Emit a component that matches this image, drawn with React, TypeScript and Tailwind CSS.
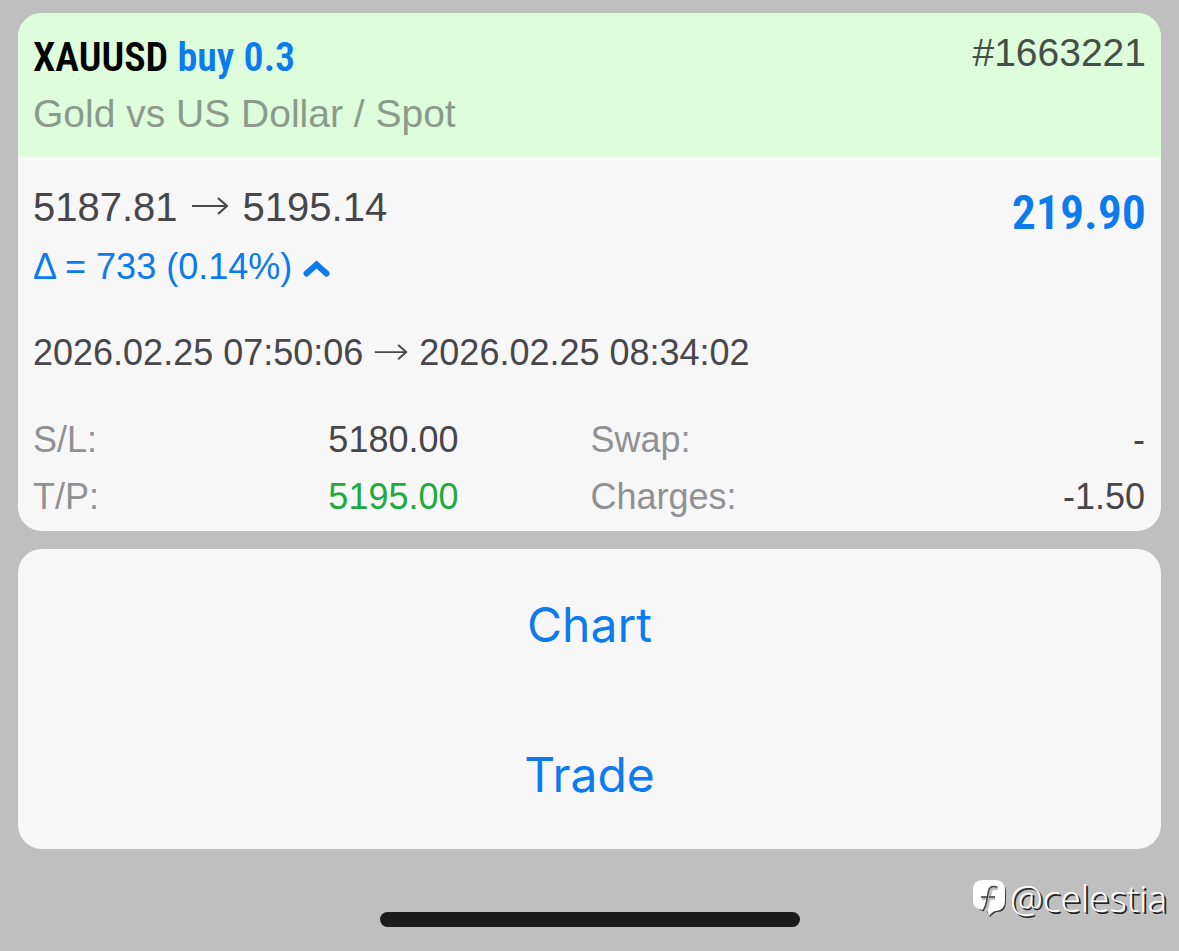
import type { ReactNode } from "react";
import { clsx } from "clsx";

interface Deal {
  symbol: string;
  side: string;
  volume: string;
  description: string;
  ticket: string;
  openPrice: string;
  closePrice: string;
  openTime: string;
  closeTime: string;
  delta: string;
  profit: string;
}

const DEAL: Deal = {
  symbol: "XAUUSD",
  side: "buy",
  volume: "0.3",
  description: "Gold vs US Dollar / Spot",
  ticket: "#1663221",
  openPrice: "5187.81",
  closePrice: "5195.14",
  openTime: "2026.02.25 07:50:06",
  closeTime: "2026.02.25 08:34:02",
  delta: "Δ = 733 (0.14%)",
  profit: "219.90",
};

const ACTIONS = ["Chart", "Trade"];

function Arrow({ className }: { className?: string }) {
  return (
    <svg
      viewBox="0 0 38 20"
      fill="none"
      stroke="currentColor"
      strokeWidth="1.8"
      className={clsx("shrink-0", className)}
      aria-hidden="true"
    >
      <path d="M1 9H36" />
      <path d="M27 1L36 9L27 17" strokeWidth="2.2" strokeLinejoin="round" />
    </svg>
  );
}

function Detail({ label, value, className }: { label: string; value: string; className?: string }) {
  return (
    <div className="flex justify-between">
      <dt className="text-[#919193]">{label}</dt>
      <dd className={className}>{value}</dd>
    </div>
  );
}

function Card({ children }: { children: ReactNode }) {
  return <section className="overflow-hidden rounded-3xl bg-[#f7f7f7]">{children}</section>;
}

function DealCard({ deal }: { deal: Deal }) {
  return (
    <Card>
      <header className="flex justify-between bg-[#ddfddb] px-[15px] pt-[14px] pb-[18px]">
        <div>
          <h1 className="font-['Roboto_Condensed',Roboto,sans-serif] text-[40px] leading-[62px] font-semibold text-black">
            {deal.symbol}{" "}
            <span className="text-[#0b7bee]">
              {deal.side} {deal.volume}
            </span>
          </h1>
          <p className="text-[39px] leading-[50px] text-[#8b9b8a]">{deal.description}</p>
        </div>
        <p className="text-[39px] leading-[52px] text-[#435046]">{deal.ticket}</p>
      </header>

      <div className="px-[15px] pt-5 pb-[6px] text-[36px] leading-[60px] text-[#47474a]">
        <div className="flex justify-between">
          <div>
            <p className="flex items-center text-[40px]">
              {deal.openPrice}
              <Arrow className="mr-[14px] ml-[13px] h-5 w-[38px]" />
              {deal.closePrice}
            </p>
            <button type="button" className="flex items-center gap-[11px] text-[#0b7bee]">
              {deal.delta}
              <svg viewBox="0 0 27 20" fill="none" stroke="currentColor" strokeWidth="6" className="mt-1 h-5 w-[27px]" aria-hidden="true">
                <path d="M3.500 14.500L13.500 5.500L23.500 14.500" strokeLinecap="round" strokeLinejoin="miter" />
              </svg>
            </button>
          </div>
          <p className="font-['Roboto_Condensed',Roboto,sans-serif] text-[48px] leading-[72px] font-semibold text-[#0b7bee]">
            {deal.profit}
          </p>
        </div>

        <p className="mt-[26px] flex items-center">
          {deal.openTime}
          <Arrow className="mx-[11px] h-[18px] w-[34px]" />
          {deal.closeTime}
        </p>

        <dl className="mt-7 grid grid-cols-2 leading-[57px]">
          <div className="pr-[131px]">
            <Detail label="S/L:" value="5180.00" />
            <Detail label="T/P:" value="5195.00" className="text-[#20ab3c]" />
          </div>
          <div className="px-px">
            <Detail label="Swap:" value="-" />
            <Detail label="Charges:" value="-1.50" />
          </div>
        </dl>
      </div>
    </Card>
  );
}

function Watermark() {
  return (
    <div className="absolute right-[12px] bottom-[33px] flex items-center gap-1 text-white">
      <svg viewBox="0 0 34 40" className="h-10 w-[34px]" aria-hidden="true">
        <path d="M13 4H23Q34 4 34 14V24Q34 34 25 34Q23 34 18 39L15 34Q4 33 4 24V14Q4 4 13 4Z" fill="#3a3a3a" />
        <path d="M11 2H23Q33 2 33 12V23Q33 32 24 33Q21 33 17 38L15 32H11Q1 31 1 23V12Q1 2 11 2Z" fill="#fff" />
        <path d="M26 10.500Q19 8 18 14L16 24Q15 30 12 35M10 20H23" fill="none" stroke="#bfbfbf" strokeWidth="4" />
        <path d="M25 9Q17.500 7 16.500 13L14.500 24Q13.500 29 11 33M9 19H15M17 19H23" fill="none" stroke="#444" strokeWidth="1.5" />
      </svg>
      <span className="font-['Open_Sans','Noto_Sans',sans-serif] text-[37px] leading-10 font-light [text-shadow:2px_2px_0_#222]">
        @celestia
      </span>
    </div>
  );
}

export default function App() {
  return (
    <main className="relative flex min-h-screen flex-col gap-[18px] bg-[#bfbfbf] px-[18px] pt-[13px] font-['Liberation_Sans',Arial,sans-serif]">
      <DealCard deal={DEAL} />

      <Card>
        {ACTIONS.map((action) => (
          <button
            key={action}
            type="button"
            className="block h-[150px] w-full pt-[2px] font-['Inter',sans-serif] text-[48px] text-[#0b7bee]"
          >
            {action}
          </button>
        ))}
      </Card>

      <div className="mt-auto mb-6 h-[15px] w-[420px] max-w-full self-center rounded-full bg-[#1b1b1b]" />
      <Watermark />
    </main>
  );
}
